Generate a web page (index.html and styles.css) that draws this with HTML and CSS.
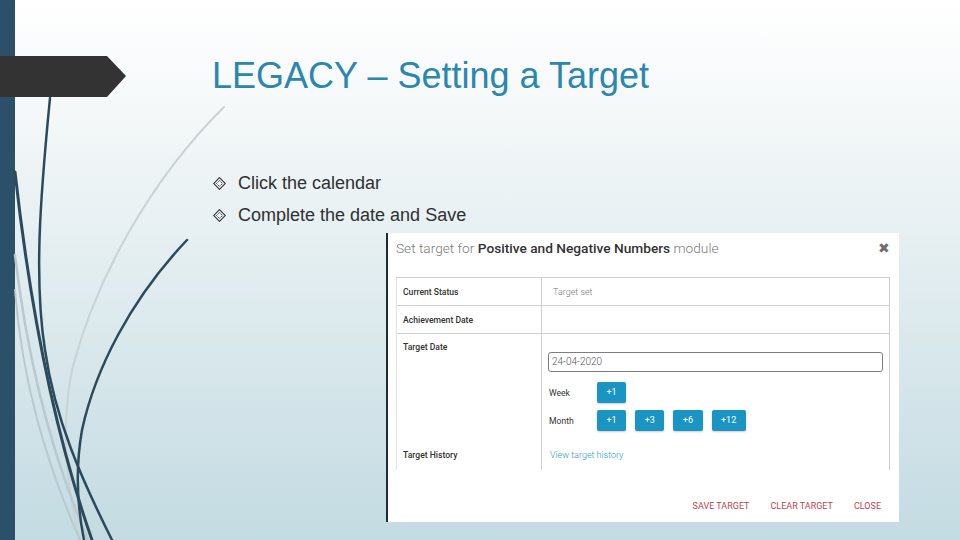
FILE: index.html
```html
<!DOCTYPE html>
<html lang="en">
<head>
<meta charset="utf-8">
<title>LEGACY – Setting a Target</title>
<link rel="stylesheet" href="styles.css">
</head>
<body>
<div class="slide">
  <svg class="deco" width="960" height="540" viewBox="0 0 960 540" aria-hidden="true">
    <g fill="none" stroke-linecap="round">
      <path d="M224 107 C150 180 95 280 72 370 C62 420 64 480 80 540" stroke="#c9d3d6" stroke-width="2"/>
      <path d="M15 255 C25 340 45 440 88 540" stroke="#b9c9cf" stroke-width="2.5"/>
      <path d="M15 290 C22 380 45 460 80 540" stroke="#b9c9cf" stroke-width="2"/>
      <path d="M50 98 C40 200 34 280 45 350 C55 420 82 480 112 540" stroke="#2c4a5c" stroke-width="2.5"/>
      <path d="M15 172 C28 290 50 420 92 540" stroke="#2c4a5c" stroke-width="3"/>
      <path d="M187 240 C130 300 95 370 82 430 C75 470 78 510 84 540" stroke="#2c4a5c" stroke-width="2.5"/>
    </g>
    <polygon points="0,56 107,56 126,76 107,97 0,97" fill="#333333"/>
  </svg>
  <div class="bar"></div>
  <div class="content">
    <h1 class="title">LEGACY – Setting a Target</h1>
    <ul class="bullets">
      <li><svg class="diamond" width="13" height="13" viewBox="0 0 12 12" aria-hidden="true"><path d="M6 0.6 L11.4 6 L6 11.4 L0.6 6 Z" fill="none" stroke="#333" stroke-width="1"/><path d="M6 3.2 L8.8 6 L6 8.8 L3.2 6 Z" fill="none" stroke="#333" stroke-width="0.9" stroke-dasharray="1.4 0.8"/></svg>Click the calendar</li>
      <li><svg class="diamond" width="13" height="13" viewBox="0 0 12 12" aria-hidden="true"><path d="M6 0.6 L11.4 6 L6 11.4 L0.6 6 Z" fill="none" stroke="#333" stroke-width="1"/><path d="M6 3.2 L8.8 6 L6 8.8 L3.2 6 Z" fill="none" stroke="#333" stroke-width="0.9" stroke-dasharray="1.4 0.8"/></svg>Complete the date and Save</li>
    </ul>
    <div class="dialog">
      <div class="dlg-head">
        <div class="dlg-title">Set target for <b>Positive and Negative Numbers</b> module</div>
        <div class="dlg-x">✖</div>
      </div>
      <div class="tbl">
        <div class="cell lab mid bb">Current Status</div>
        <div class="cell val mid bb">Target set</div>
        <div class="cell lab mid bb">Achievement Date</div>
        <div class="cell val mid bb"></div>
        <div class="cell lab top">Target Date</div>
        <div class="cell val datecell">
          <div class="input">24-04-2020</div>
          <div class="opt-row"><span class="opt-lab">Week</span><span class="btns"><span class="btn">+1</span></span></div>
          <div class="opt-row month"><span class="opt-lab">Month</span><span class="btns"><span class="btn">+1</span><span class="btn">+3</span><span class="btn">+6</span><span class="btn">+12</span></span></div>
        </div>
        <div class="cell lab hist">Target History</div>
        <div class="cell val hist"><span class="link">View target history</span></div>
      </div>
      <div class="dlg-foot">
        <span class="act">SAVE TARGET</span>
        <span class="act">CLEAR TARGET</span>
        <span class="act">CLOSE</span>
      </div>
    </div>
  </div>
</div>
</body>
</html>
```
FILE: styles.css
```css
* { box-sizing: border-box; }
html, body { margin: 0; padding: 0; }
body { width: 960px; height: 540px; overflow: hidden; font-family: "Liberation Sans", Arial, sans-serif; }

.slide {
  position: relative;
  width: 960px;
  height: 540px;
  display: flex;
  background: linear-gradient(to bottom, #ffffff 0%, #f6f9fa 18%, #e2edf0 50%, #c3dbe2 100%);
}
.deco { position: absolute; left: 0; top: 0; z-index: 1; }
.bar { width: 15px; height: 540px; background: #2c5068; position: relative; z-index: 0; flex: none; }
.content { position: relative; z-index: 2; padding-left: 197px; padding-top: 54px; flex: 1; }

.title {
  margin: 0;
  font-family: "Liberation Sans", Arial, sans-serif;
  font-weight: normal;
  font-size: 36px;
  line-height: 44px;
  color: #2b87b0;
  white-space: nowrap;
}
.bullets { list-style: none; margin: 69px 0 0 0; padding: 0; }
.bullets li {
  display: flex;
  align-items: center;
  font-size: 18px;
  line-height: 32px;
  color: #303030;
}
.diamond { margin-left: 1px; margin-right: 12px; flex: none; }

.dialog {
  margin-top: 2px;
  margin-left: 174px;
  width: 513px;
  height: 289px;
  background: #fff;
  border-left: 2px solid #1f2c34;
  padding-left: 8px;
  font-family: Roboto, "Liberation Sans", sans-serif;
}
.dlg-head {
  height: 44px;
  display: flex;
  justify-content: space-between;
  align-items: flex-start;
  padding-top: 7px;
  padding-right: 9px;
}
.dlg-title { font-size: 13.7px; line-height: 16px; color: #7a7a7a; font-weight: 300; white-space: nowrap; }
.dlg-title b { font-weight: 500; color: #333; }
.dlg-x { font-size: 14px; line-height: 16px; color: #6e6e6e; }

.tbl {
  width: 494px;
  display: grid;
  grid-template-columns: 145px 1fr;
  grid-template-rows: 28px 28px 107px 29px;
  border-top: 1px solid #cfcfcf;
  border-left: 1px solid #e3e3e3;
  border-right: 1px solid #cfcfcf;
}
.cell { font-size: 8.6px; line-height: 12px; }
.lab { color: #333; font-weight: 500; padding-left: 6px; border-right: 1px solid #cfcfcf; }
.val { color: #777; font-weight: 300; font-size: 9px; padding-left: 11px; }
.mid { display: flex; align-items: center; }
.bb { border-bottom: 1px solid #cfcfcf; }
.top { padding-top: 7px; }
.hist { padding-top: 8px; }
.datecell { padding: 18px 6px 0 6px; }
.input {
  height: 20px;
  border: 1px solid #7d7d7d;
  border-radius: 3px;
  padding-left: 3px;
  font-size: 10px;
  line-height: 18px;
  color: #555;
  font-weight: 300;
}
.opt-row { display: flex; align-items: center; margin-top: 10px; height: 21px; }
.opt-row.month { margin-top: 7px; }
.opt-lab { width: 49px; padding-left: 1px; color: #333; font-weight: 400; font-size: 8.6px; }
.btns { display: flex; gap: 9px; }
.btn {
  height: 21px;
  padding: 0 9.5px;
  background: #1a95c3;
  color: #fff;
  border-radius: 2px;
  font-size: 9px;
  line-height: 21px;
  font-weight: 400;
  box-shadow: 0 1px 2px rgba(0,0,0,0.2);
}
.link { color: #2a9cc5; }
.val.hist { padding-left: 8px; }

.dlg-foot {
  display: flex;
  justify-content: flex-end;
  gap: 21px;
  padding-right: 18px;
  margin-top: 30px;
}
.act { font-size: 9px; line-height: 12px; color: #bd4650; font-weight: 400; }
```
